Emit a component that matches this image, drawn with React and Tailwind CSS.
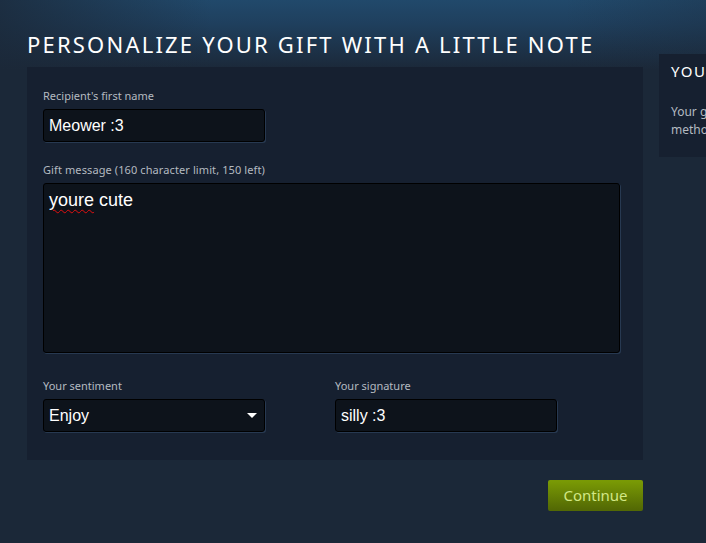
import React from "react";

export default function App() {
  return (
    <div className="relative w-[706px] h-[543px] overflow-hidden bg-[#1b2838] font-['Noto_Sans',sans-serif]">
      <div className="absolute inset-x-0 top-0 h-[70px] bg-[linear-gradient(to_bottom,#21496b_0%,#1f3f5d_35%,#1b2838_100%)]" />
      <div className="absolute inset-x-0 top-0 h-[70px] bg-[linear-gradient(to_right,rgba(27,40,56,0.8)_0%,rgba(27,40,56,0)_30%,rgba(27,40,56,0)_80%,rgba(27,40,56,0.3)_100%)]" />
      <div className="relative flex gap-[16px] pl-[27px]">
        <div className="w-[616px] shrink-0">
          <h1 className="mt-[30px] h-[37px] text-[22px] leading-[28px] tracking-[2.2px] text-white uppercase font-normal whitespace-nowrap">
            Personalize your gift with a little note
          </h1>
          <div className="bg-[#162030] px-[16px] pt-[22px] pb-[28px]">
            <label className="block text-[11px] leading-[14px] text-[#b4bac0]">Recipient's first name</label>
            <div className="mt-[6px] w-[222px] h-[33px] rounded-[3px] border border-black bg-[#0d131b] shadow-[1px_1px_0_0_rgba(91,132,181,0.25)] flex items-center px-[5px] font-['Liberation_Sans',Arial,sans-serif] text-[16px] text-white">
              Meower :3
            </div>
            <label className="block mt-[21px] text-[11px] leading-[14px] tracking-[0.1px] text-[#b4bac0]">Gift message (160 character limit, 150 left)</label>
            <div className="mt-[6px] w-[577px] h-[170px] rounded-[3px] border border-black bg-[#0d131b] shadow-[1px_1px_0_0_rgba(91,132,181,0.25)] px-[5px] pt-[5px] font-['Liberation_Sans',Arial,sans-serif] text-[18px] leading-[22px] text-white">
              <span className="underline decoration-wavy decoration-[#e01010] decoration-1 underline-offset-[3px]">youre</span> cute
            </div>
            <div className="mt-[26px] flex">
              <div className="w-[292px]">
                <label className="block text-[11px] leading-[14px] text-[#b4bac0]">Your sentiment</label>
                <div className="mt-[6px] w-[222px] h-[33px] rounded-[3px] border border-black bg-[#0d131b] shadow-[1px_1px_0_0_rgba(91,132,181,0.25)] flex items-center justify-between pl-[5px] pr-[7px] font-['Liberation_Sans',Arial,sans-serif] text-[16px] text-white">
                  <span>Enjoy</span>
                  <svg width="10" height="6" viewBox="0 0 10 6"><path d="M0 0 L10 0 L5 5 Z" fill="#fff" /></svg>
                </div>
              </div>
              <div>
                <label className="block text-[11px] leading-[14px] text-[#b4bac0]">Your signature</label>
                <div className="mt-[6px] w-[222px] h-[33px] rounded-[3px] border border-black bg-[#0d131b] shadow-[1px_1px_0_0_rgba(91,132,181,0.25)] flex items-center px-[5px] font-['Liberation_Sans',Arial,sans-serif] text-[16px] text-white">
                  silly :3
                </div>
              </div>
            </div>
          </div>
          <div className="mt-[20px] flex justify-end">
            <button className="w-[95px] h-[31px] rounded-[2px] bg-[linear-gradient(to_bottom,#799905_5%,#536904_95%)] text-[#d2e885] text-[15px] leading-[31px]">
              Continue
            </button>
          </div>
        </div>
        <div className="mt-[54px] w-[260px] h-[103px] shrink-0 bg-[#162030] px-[12px] pt-[7px]">
          <div className="text-[15px] leading-[20px] tracking-[1.5px] text-white uppercase whitespace-nowrap">Your gift</div>
          <div className="mt-[22px] text-[12px] leading-[18px] text-[#b4bac0] whitespace-nowrap">
            Your gift will be sent using this<br />method
          </div>
        </div>
      </div>
    </div>
  );
}
